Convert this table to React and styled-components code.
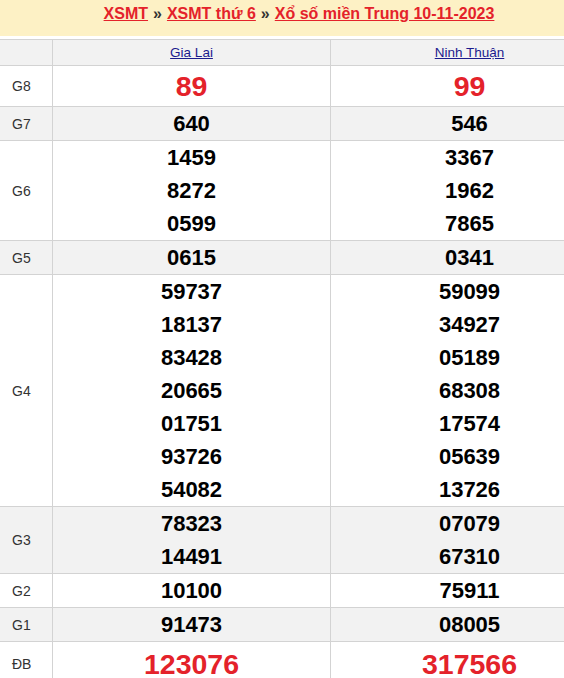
import React from "react";
import styled, { createGlobalStyle } from "styled-components";

const Global = createGlobalStyle`
  body {
    margin: 0;
    background: #fff;
    overflow: hidden;
    font-family: "Liberation Sans", Arial, sans-serif;
  }
`;

const Page = styled.div`
  width: 608px;
`;

const TitleBar = styled.div`
  height: 36px;
  background: #fdf1c5;
  margin-bottom: 3px;
  display: flex;
  justify-content: center;
  padding: 4px 10px 0 0;
  box-sizing: border-box;
  font-size: 16px;
  font-weight: bold;
  line-height: 20px;
  color: #333;
`;

const Crumb = styled.a`
  color: #e4222a;
  text-decoration: underline;
`;

const Sep = styled.span`
  margin: 0 5px;
`;

const Row = styled.div`
  display: grid;
  grid-template-columns: 52px 278px 278px;
  border-top: 1px solid #d3d3d3;
  background: ${p => (p.$shade ? "#f2f2f2" : "#fff")};
`;

const Label = styled.div`
  display: flex;
  align-items: center;
  padding-left: 12px;
  font-size: 14px;
  color: #333;
`;

const Cell = styled.div`
  border-left: 1px solid #d3d3d3;
  text-align: center;
`;

const Province = styled.a`
  display: block;
  line-height: 25px;
  font-size: 13.5px;
  color: #1b1b8e;
  text-decoration: underline;
`;

const Num = styled.div`
  line-height: ${p => (p.$big ? p.$h : 33)}px;
  height: ${p => (p.$big ? p.$h : 33)}px;
  font-size: ${p => (p.$big ? 28.5 : 22)}px;
  font-weight: bold;
  color: ${p => (p.$big ? "#e4222a" : "#000")};
`;

const prizes = [
  { name: "G8", a: ["89"], b: ["99"], big: 40 },
  { name: "G7", a: ["640"], b: ["546"] },
  { name: "G6", a: ["1459", "8272", "0599"], b: ["3367", "1962", "7865"] },
  { name: "G5", a: ["0615"], b: ["0341"] },
  {
    name: "G4",
    a: ["59737", "18137", "83428", "20665", "01751", "93726", "54082"],
    b: ["59099", "34927", "05189", "68308", "17574", "05639", "13726"],
  },
  { name: "G3", a: ["78323", "14491"], b: ["07079", "67310"] },
  { name: "G2", a: ["10100"], b: ["75911"] },
  { name: "G1", a: ["91473"], b: ["08005"] },
  { name: "ĐB", a: ["123076"], b: ["317566"], big: 44 },
];

const App = () => {
  return (
    <Page>
      <Global />
      <TitleBar>
        <Crumb href="#">XSMT</Crumb>
        <Sep>»</Sep>
        <Crumb href="#">XSMT thứ 6</Crumb>
        <Sep>»</Sep>
        <Crumb href="#">Xổ số miền Trung 10-11-2023</Crumb>
      </TitleBar>
      <Row $shade>
        <Label />
        <Cell>
          <Province href="#">Gia Lai</Province>
        </Cell>
        <Cell>
          <Province href="#">Ninh Thuận</Province>
        </Cell>
      </Row>
      {prizes.map((p, i) => (
        <Row key={p.name} $shade={i % 2 === 1}>
          <Label>{p.name}</Label>
          <Cell>
            {p.a.map(n => (
              <Num key={n} $big={!!p.big} $h={p.big}>{n}</Num>
            ))}
          </Cell>
          <Cell>
            {p.b.map(n => (
              <Num key={n} $big={!!p.big} $h={p.big}>{n}</Num>
            ))}
          </Cell>
        </Row>
      ))}
    </Page>
  );
};

export default App;
